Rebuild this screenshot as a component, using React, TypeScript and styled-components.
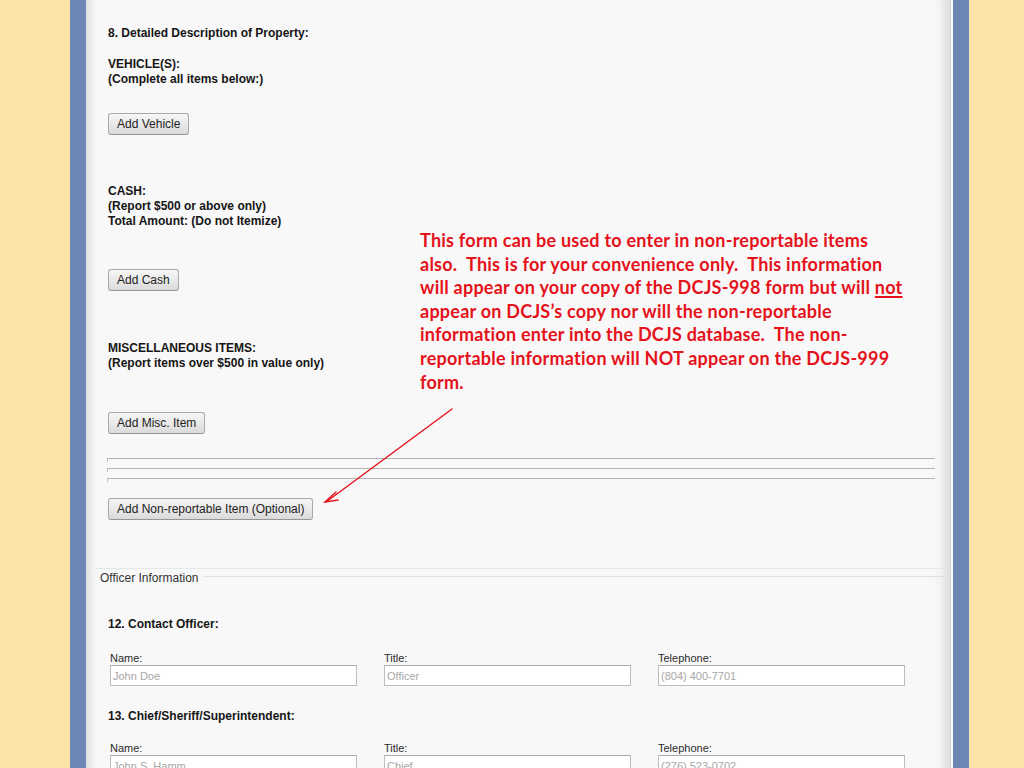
import React from "react";
import styled, { createGlobalStyle } from "styled-components";

const GlobalStyle = createGlobalStyle`
  html, body { margin: 0; padding: 0; height: 100%; overflow: hidden; }
  body {
    background: #fde2a8;
    font-family: "Liberation Sans", Arial, sans-serif;
    color: #111;
  }
`;

const Page = styled.div`
  position: relative;
  width: 1024px;
  height: 768px;
  overflow: hidden;
`;

const Frame = styled.div`
  margin-left: 70px;
  width: 867px;
  min-height: 820px;
  border-left: 16px solid #6d86b3;
  border-right: 16px solid #6d86b3;
  background: #f8f8f8;
  box-shadow:
    inset 10px 0 8px -6px rgba(0, 0, 0, 0.12),
    inset -2px 0 0 #f8f8f8,
    inset -3px 0 0 #ddd2d2,
    inset -18px 0 10px -8px rgba(0, 0, 0, 0.1);
`;

const Section = styled.div`
  padding: 26px 18px 0 22px;
`;

const Heading = styled.div<{ $mt?: number }>`
  margin-top: ${(p) => p.$mt ?? 0}px;
  font-size: 12px;
  line-height: 15px;
  font-weight: bold;
  color: #151515;
`;

const Button = styled.button<{ $mt: number }>`
  display: block;
  margin-top: ${(p) => p.$mt}px;
  height: 22px;
  padding: 0 8px;
  border: 1px solid #a9a9a9;
  border-bottom-color: #959595;
  border-radius: 3px;
  background: linear-gradient(#f6f6f6, #e9e9e9 50%, #dadada);
  font-family: "Liberation Sans", Arial, sans-serif;
  font-size: 12px;
  color: #222;
  white-space: nowrap;
`;

const RuleStack = styled.div`
  margin-top: 24px;
  margin-left: -1px;
  display: flex;
  flex-direction: column;
  gap: 9px;
`;

const Rule = styled.div`
  position: relative;
  border-top: 1px solid #b3b3b3;
  &::before {
    content: "";
    position: absolute;
    left: 0;
    top: 0;
    width: 1px;
    height: 3px;
    background: #c4c4c4;
  }
`;

const FieldsetEdge = styled.div`
  margin: 48px 6px 0 9px;
  border-top: 1px solid #e2e9e9;
`;

const LegendRow = styled.div`
  display: flex;
  align-items: flex-start;
  margin: 2px 6px 0 14px;
`;

const LegendText = styled.span`
  font-size: 12px;
  line-height: 15px;
  color: #333;
  padding-right: 5px;
`;

const LegendLine = styled.div`
  flex: 1;
  margin-top: 5px;
  border-top: 1px solid #d9e3e3;
`;

const Officer = styled.div`
  padding: 0 18px 0 22px;
`;

const FieldGrid = styled.div<{ $mt: number }>`
  margin-top: ${(p) => p.$mt}px;
  margin-left: 2px;
  display: grid;
  grid-template-columns: repeat(3, 247px);
  column-gap: 27px;
`;

const Field = styled.label`
  display: flex;
  flex-direction: column;
`;

const Label = styled.span`
  font-size: 11px;
  line-height: 13px;
  color: #2a2a2a;
`;

const Input = styled.input`
  box-sizing: border-box;
  height: 21px;
  width: 100%;
  margin: 0;
  padding: 0 2px;
  border: 1px solid #bdbdbd;
  border-top-color: #a9a9a9;
  background: #fff;
  font-family: "Liberation Sans", Arial, sans-serif;
  font-size: 11px;
  &::placeholder {
    color: #a6a6a6;
  }
`;

const Callout = styled.div`
  position: absolute;
  left: 420px;
  top: 229px;
  font-family: Lato, "Open Sans", sans-serif;
  font-weight: 700;
  font-size: 18px;
  letter-spacing: 0.24px;
  line-height: 23.6px;
  color: #e5121b;
  white-space: nowrap;
  u {
    text-decoration-thickness: 1.5px;
    text-underline-offset: 2px;
  }
`;

const ArrowLayer = styled.svg`
  position: absolute;
  left: 0;
  top: 0;
  pointer-events: none;
`;

type F = { label: string; value: string };

const FieldRow = ({ mt, fields }: { mt: number; fields: F[] }) => (
  <FieldGrid $mt={mt}>
    {fields.map((f) => (
      <Field key={f.label}>
        <Label>{f.label}</Label>
        <Input readOnly placeholder={f.value} />
      </Field>
    ))}
  </FieldGrid>
);

export default function App() {
  return (
    <Page>
      <GlobalStyle />
      <Frame>
        <Section>
          <Heading>8. Detailed Description of Property:</Heading>
          <Heading $mt={16}>
            VEHICLE(S):
            <br />
            (Complete all items below:)
          </Heading>
          <Button $mt={26}>Add Vehicle</Button>
          <Heading $mt={49}>
            CASH:
            <br />
            (Report $500 or above only)
            <br />
            Total Amount: (Do not Itemize)
          </Heading>
          <Button $mt={40}>Add Cash</Button>
          <Heading $mt={50}>
            MISCELLANEOUS ITEMS:
            <br />
            (Report items over $500 in value only)
          </Heading>
          <Button $mt={41}>Add Misc. Item</Button>
          <RuleStack>
            <Rule />
            <Rule />
            <Rule />
          </RuleStack>
          <Button $mt={19}>Add Non-reportable Item (Optional)</Button>
        </Section>
        <FieldsetEdge />
        <LegendRow>
          <LegendText>Officer Information</LegendText>
          <LegendLine />
        </LegendRow>
        <Officer>
          <Heading $mt={31}>12. Contact Officer:</Heading>
          <FieldRow
            mt={20}
            fields={[
              { label: "Name:", value: "John Doe" },
              { label: "Title:", value: "Officer" },
              { label: "Telephone:", value: "(804) 400-7701" },
            ]}
          />
          <Heading $mt={23}>13. Chief/Sheriff/Superintendent:</Heading>
          <FieldRow
            mt={18}
            fields={[
              { label: "Name:", value: "John S. Hamm" },
              { label: "Title:", value: "Chief" },
              { label: "Telephone:", value: "(276) 523-0702" },
            ]}
          />
        </Officer>
      </Frame>
      <Callout>
        This form can be used to enter in non-reportable items
        <br />
        also.&nbsp; This is for your convenience only.&nbsp; This information
        <br />
        will appear on your copy of the DCJS-998 form but will <u>not</u>
        <br />
        appear on DCJS’s copy nor will the non-reportable
        <br />
        information enter into the DCJS database.&nbsp; The non-
        <br />
        reportable information will NOT appear on the DCJS-999
        <br />
        form.
      </Callout>
      <ArrowLayer width="1024" height="768" viewBox="0 0 1024 768">
        <g stroke="#e5121b" strokeWidth="1.4" fill="none" strokeLinecap="round">
          <line x1="452" y1="409" x2="326" y2="502" />
          <polyline points="336,492 325,502 338,500" />
        </g>
      </ArrowLayer>
    </Page>
  );
}
